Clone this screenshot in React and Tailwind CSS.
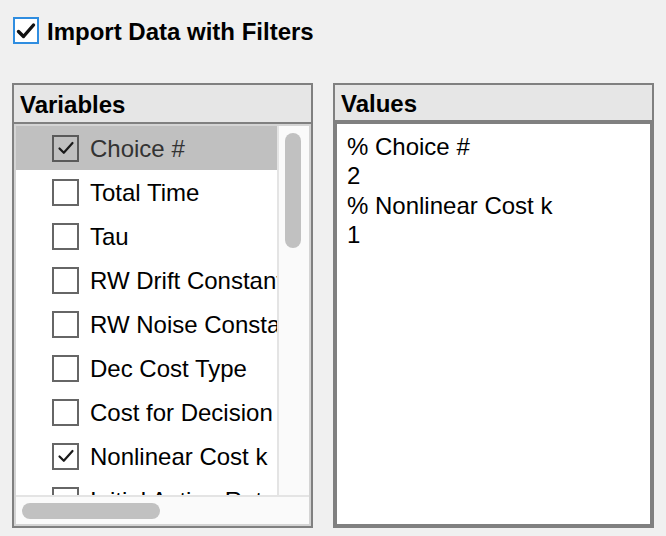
import React from "react";

const rows = [
  { label: "Choice #", checked: true, selected: true },
  { label: "Total Time" },
  { label: "Tau" },
  { label: "RW Drift Constant" },
  { label: "RW Noise Constant" },
  { label: "Dec Cost Type" },
  { label: "Cost for Decision" },
  { label: "Nonlinear Cost k", checked: true },
  { label: "Initial Action Rate" },
];

function ThinCheck() {
  return (
    <svg width="22" height="22" viewBox="0 0 22 22" className="block">
      <path d="M4.5 11.5 L8.8 15.8 L17.5 6" fill="none" stroke="#1a1a1a" strokeWidth="2.2" strokeLinecap="round" strokeLinejoin="round" />
    </svg>
  );
}

function Row({ label, checked, selected }) {
  return (
    <div className={`flex h-[44px] shrink-0 items-center pl-[36px] ${selected ? "bg-[#c0c0c0]" : ""}`}>
      <div className={`flex h-[27px] w-[27px] shrink-0 items-center justify-center border-2 ${selected ? "border-[#5a5a5a]" : "border-[#666666]"} ${selected ? "bg-[#c0c0c0]" : "bg-white"}`}>
        {checked && <ThinCheck />}
      </div>
      <span className={`ml-[11px] whitespace-nowrap pt-[2px] text-[24px] leading-none ${selected ? "text-[#333333]" : "text-black"}`}>{label}</span>
    </div>
  );
}

export default function App() {
  return (
    <div className="h-[536px] w-[666px] overflow-hidden bg-[#f0f0f0] font-['Liberation_Sans',Arial,sans-serif]">
      <div className="flex items-center pl-[13px] pt-[17px]">
        <div className="flex h-[27px] w-[26px] items-center justify-center border-2 border-[#2f8de0] bg-white">
          <svg width="22" height="22" viewBox="0 0 22 22" className="block">
            <path d="M3.5 11.5 L8.5 16.5 L18.5 5" fill="none" stroke="#111111" strokeWidth="3.4" strokeLinecap="round" strokeLinejoin="round" />
          </svg>
        </div>
        <span className="ml-[8px] pt-[2px] text-[24px] font-bold leading-none text-black">Import Data with Filters</span>
      </div>

      <div className="mt-[39px] flex pl-[12px]">
        {/* Variables panel */}
        <div className="flex h-[445px] w-[301px] flex-col border-2 border-[#808080]">
          <div className="flex h-[39px] shrink-0 items-center border-b-2 border-[#808080] bg-[#e6e6e6] px-[6px] pt-[2px]">
            <span className="text-[24px] font-bold leading-none text-black">Variables</span>
          </div>
          <div className="flex min-h-0 flex-1 flex-col border-2 border-[#d4d4d4] bg-[#fafafa]">
            <div className="flex min-h-0 flex-1">
              <div className="flex min-w-0 flex-1 flex-col overflow-hidden border-r-2 border-[#e4e4e4] bg-white">
                {rows.map((r) => (
                  <Row key={r.label} {...r} />
                ))}
              </div>
              <div className="w-[30px] shrink-0 pl-[6px] pt-[7px]">
                <div className="h-[115px] w-[16px] rounded-full bg-[#c1c1c1]" />
              </div>
            </div>
            <div className="flex h-[29px] shrink-0 items-center border-t-2 border-[#e4e4e4] pl-[6px]">
              <div className="h-[16px] w-[138px] rounded-full bg-[#c1c1c1]" />
            </div>
          </div>
        </div>

        {/* Values panel */}
        <div className="ml-[20px] flex h-[445px] w-[321px] flex-col border-2 border-[#808080]">
          <div className="flex h-[37px] shrink-0 items-center border-b-2 border-[#808080] bg-[#e6e6e6] px-[6px] pt-[2px]">
            <span className="text-[24px] font-bold leading-none text-black">Values</span>
          </div>
          <div className="flex-1 border-2 border-[#808080] bg-white px-[10px] pt-[8px] text-[24px] leading-[29.4px] text-black">
            <div>% Choice #</div>
            <div>2</div>
            <div>% Nonlinear Cost k</div>
            <div>1</div>
          </div>
        </div>
      </div>
    </div>
  );
}
